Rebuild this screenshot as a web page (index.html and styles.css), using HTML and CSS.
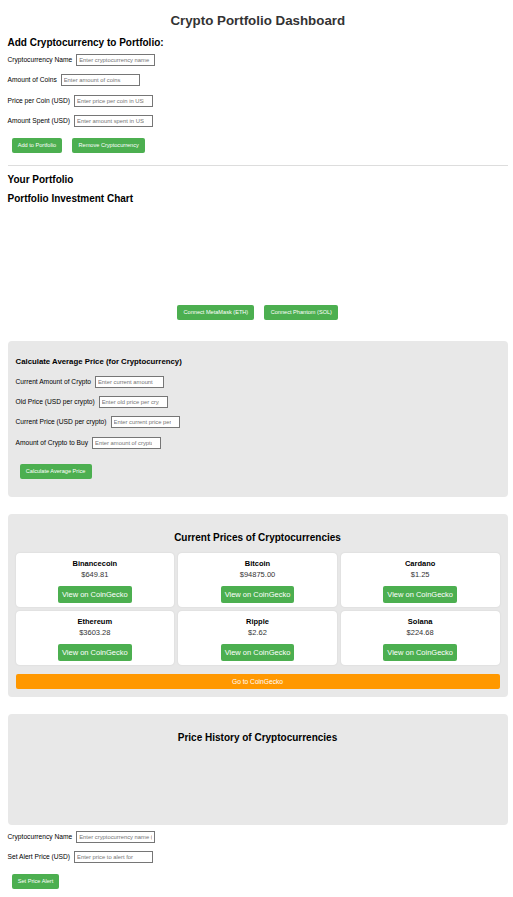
FILE: index.html
```html
<!DOCTYPE html>
<html lang="en">
<head>
    <meta charset="UTF-8">
    <meta name="viewport" content="width=device-width, initial-scale=1.0">
    <title>Crypto Portfolio Dashboard</title>
    <link rel="stylesheet" href="styles.css">
</head>

<body>
    <h1>Crypto Portfolio Dashboard</h1>

    <div class="add-form">
        <h2>Add Cryptocurrency to Portfolio:</h2>
        <div class="field">
            <label for="name">Cryptocurrency Name</label>
            <input type="text" id="name" placeholder="Enter cryptocurrency name">
        </div>
        <div class="field">
            <label for="amount">Amount of Coins</label>
            <input type="number" id="amount" placeholder="Enter amount of coins">
        </div>
        <div class="field">
            <label for="price">Price per Coin (USD)</label>
            <input type="number" id="price" placeholder="Enter price per coin in USD">
        </div>
        <div class="field">
            <label for="spent">Amount Spent (USD)</label>
            <input type="number" id="spent" placeholder="Enter amount spent in USD">
        </div>
        <div class="actions">
            <button>Add to Portfolio</button>
            <button>Remove Cryptocurrency</button>
        </div>
    </div>

    <div class="portfolio">
        <h2>Your Portfolio</h2>
        <h2>Portfolio Investment Chart</h2>
        <div class="chart"></div>
    </div>

    <div class="wallets">
        <button>Connect MetaMask (ETH)</button>
        <button>Connect Phantom (SOL)</button>
    </div>

    <div class="panel average">
        <h3>Calculate Average Price (for Cryptocurrency)</h3>
        <div class="field">
            <label for="currentAmount">Current Amount of Crypto</label>
            <input type="number" id="currentAmount" placeholder="Enter current amount">
        </div>
        <div class="field">
            <label for="oldPrice">Old Price (USD per crypto)</label>
            <input type="number" id="oldPrice" placeholder="Enter old price per crypto">
        </div>
        <div class="field">
            <label for="currentPrice">Current Price (USD per crypto)</label>
            <input type="number" id="currentPrice" placeholder="Enter current price per crypto">
        </div>
        <div class="field">
            <label for="buyAmount">Amount of Crypto to Buy</label>
            <input type="number" id="buyAmount" placeholder="Enter amount of crypto to buy">
        </div>
        <div class="actions">
            <button>Calculate Average Price</button>
        </div>
    </div>

    <div class="panel prices">
        <h2>Current Prices of Cryptocurrencies</h2>
        <div class="price-grid">
            <div class="card">
                <strong>Binancecoin</strong>
                <span>$649.81</span>
                <a class="view">View on CoinGecko</a>
            </div>
            <div class="card">
                <strong>Bitcoin</strong>
                <span>$94875.00</span>
                <a class="view">View on CoinGecko</a>
            </div>
            <div class="card">
                <strong>Cardano</strong>
                <span>$1.25</span>
                <a class="view">View on CoinGecko</a>
            </div>
            <div class="card">
                <strong>Ethereum</strong>
                <span>$3603.28</span>
                <a class="view">View on CoinGecko</a>
            </div>
            <div class="card">
                <strong>Ripple</strong>
                <span>$2.62</span>
                <a class="view">View on CoinGecko</a>
            </div>
            <div class="card">
                <strong>Solana</strong>
                <span>$224.68</span>
                <a class="view">View on CoinGecko</a>
            </div>
        </div>
        <a class="gecko">Go to CoinGecko</a>
    </div>

    <div class="panel history">
        <h2>Price History of Cryptocurrencies</h2>
    </div>

    <div class="alerts">
        <div class="field">
            <label for="alertName">Cryptocurrency Name</label>
            <input type="text" id="alertName" placeholder="Enter cryptocurrency name (e.g. bitcoin)">
        </div>
        <div class="field">
            <label for="alertPrice">Set Alert Price (USD)</label>
            <input type="number" id="alertPrice" placeholder="Enter price to alert for">
        </div>
        <div class="actions">
            <button>Set Price Alert</button>
        </div>
    </div>
</body>
</html>
```

FILE: styles.css
```css
* {
    box-sizing: border-box;
}
body {
    margin: 0;
    padding: 13px 5px 0 7.5px;
    height: 897px;
    overflow: hidden;
    background-color: #fff;
    color: #000;
    font-family: "Liberation Sans", Arial, sans-serif;
    font-size: 6.67px;
}
h1 {
    margin: 0;
    font-size: 13.33px;
    line-height: 15px;
    text-align: center;
    color: #333;
}
h2 {
    margin: 0;
    font-size: 10px;
    line-height: 12px;
}
h3 {
    margin: 0;
    font-size: 7.8px;
    line-height: 10px;
}
.add-form {
    height: 138px;
    padding-top: 9px;
    border-bottom: 1px solid #ddd;
}
.add-form h2 {
    margin-bottom: 5px;
}
.field {
    display: flex;
    gap: 4px;
    height: 20.4px;
}
.field label {
    line-height: 11px;
    white-space: nowrap;
}
input {
    width: 79px;
    height: 12px;
    margin: 0;
    padding: 0 2px;
    border: 1px solid #767676;
    border-radius: 0;
    background-color: #fff;
    font-family: inherit;
    font-size: 5.83px;
}
/* leave room where the spinner would be */
input[type="number"] {
    padding-right: 8px;
}
input::-webkit-inner-spin-button {
    display: none;
}
input::placeholder {
    color: #757575;
}
button {
    height: 15px;
    padding: 0 6.25px;
    border: none;
    border-radius: 2px;
    background-color: #4CAF50;
    color: white;
    font-family: inherit;
    font-size: 5.6px;
    line-height: 15px;
    cursor: pointer;
}
button:hover {
    background-color: #45a049;
}
.actions {
    display: flex;
    gap: 10px;
    padding: 2.4px 4px 0;
}
.portfolio {
    height: 139px;
    padding-top: 8px;
}
.portfolio h2 {
    margin-bottom: 7px;
}
.wallets {
    display: flex;
    justify-content: center;
    gap: 10px;
    height: 36px;
}
.panel {
    margin-bottom: 17px;
    padding: 0 8.5px 0 8px;
    border-radius: 4px;
    background-color: #e8e8e8;
}
.average {
    height: 156px;
    padding-top: 16px;
}
.average h3 {
    margin-bottom: 8.5px;
}
.average input {
    width: 69px;
}
.average .actions {
    padding-top: 6.9px;
}
.prices {
    height: 183px;
    padding-top: 18px;
}
.prices h2,
.history h2 {
    text-align: center;
}
.price-grid {
    display: grid;
    grid-template-columns: repeat(3, 1fr);
    gap: 4px;
    margin-top: 9px;
}
.card {
    display: flex;
    flex-direction: column;
    align-items: center;
    height: 54px;
    padding-top: 5px;
    border-radius: 4px;
    background-color: #fff;
    box-shadow: 0 0 2px rgba(0, 0, 0, 0.1);
    font-size: 7.5px;
    line-height: 11px;
}
.card span {
    color: #333;
}
.view {
    height: 17px;
    margin-top: 6px;
    padding: 0 4px;
    border-radius: 2px;
    background-color: #4CAF50;
    color: white;
    line-height: 17px;
}
.gecko {
    display: block;
    height: 15px;
    margin-top: 9px;
    border-radius: 2px;
    background-color: #ff9800;
    color: white;
    line-height: 15px;
    text-align: center;
}
.history {
    height: 111px;
    margin-bottom: 6px;
    padding-top: 18px;
}
```
